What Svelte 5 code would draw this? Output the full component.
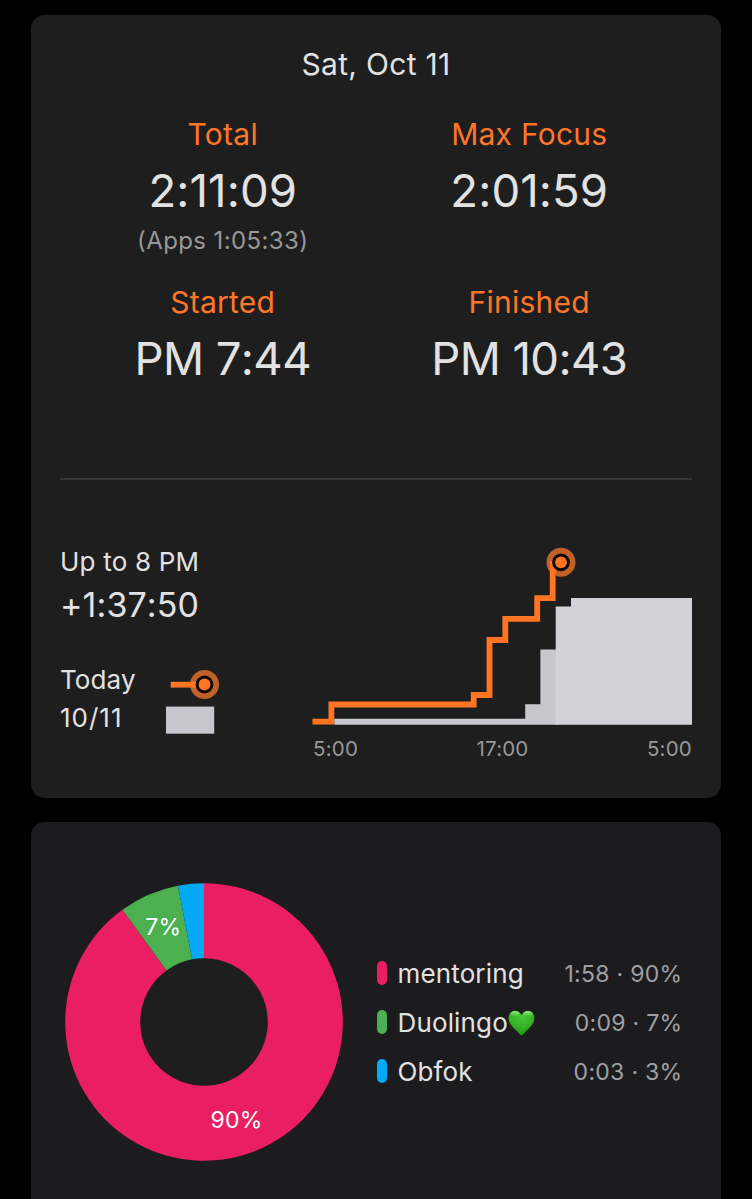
<script>
  const stats = [
    { label: "Total", value: "2:11:09", note: "(Apps 1:05:33)", duration: true },
    { label: "Max Focus", value: "2:01:59", duration: true },
    { label: "Started", value: "PM 7:44" },
    { label: "Finished", value: "PM 10:43" },
  ];

  const tasks = [
    { name: "mentoring", time: "1:58", percent: 90, color: "#e91e63" },
    { name: "Duolingo", time: "0:09", percent: 7, color: "#4caf50", heart: true },
    { name: "Obfok", time: "0:03", percent: 3, color: "#03a9f4" },
  ];

  const CENTER = 139;
  const OUTER = 138.8;
  const INNER = 63.8;

  function point(percent, radius) {
    const angle = (percent / 100) * Math.PI * 2;
    const x = CENTER + radius * Math.sin(angle);
    const y = CENTER - radius * Math.cos(angle);
    return `${x.toFixed(2)} ${y.toFixed(2)}`;
  }

  function slicePath(from, to) {
    const large = to - from > 50 ? 1 : 0;
    return [
      `M${point(from, OUTER)}`,
      `A${OUTER} ${OUTER} 0 ${large} 1 ${point(to, OUTER)}`,
      `L${point(to, INNER)}`,
      `A${INNER} ${INNER} 0 ${large} 0 ${point(from, INNER)}Z`,
    ].join(" ");
  }

  let start = 0;
  const slices = tasks.map((task) => {
    const from = start;
    start += task.percent;
    return { color: task.color, path: slicePath(from, start) };
  });
</script>

{#snippet marker(x, y)}
  <circle cx={x} cy={y} r="8.9" class="marker-ring" />
  <circle cx={x} cy={y} r="5.9" class="marker-dot" />
{/snippet}

<main>
  <section class="card day">
    <h1>Sat, Oct 11</h1>

    <div class="stats">
      {#each stats as stat}
        <div class="stat">
          <span class="label">{stat.label}</span>
          <span class="value" class:duration={stat.duration}>{stat.value}</span>
          {#if stat.note}
            <span class="note">{stat.note}</span>
          {/if}
        </div>
      {/each}
    </div>

    <hr />

    <div class="progress">
      <div class="compare">
        <span class="until">Up to 8 PM</span>
        <span class="diff">+1:37:50</span>
        <div class="keys">
          <div class="key-names">
            <span>Today</span>
            <span class="date">10/11</span>
          </div>
          <svg width="54" height="66" viewBox="0 0 54 66">
            <circle cx="38.5" cy="16.5" r="14.5" class="halo" />
            <path d="M4.7 16.7H31" class="line" />
            {@render marker(38.5, 16.5)}
            <rect x="0" y="38.6" width="48.2" height="27.1" class="area" />
          </svg>
        </div>
      </div>

      <div class="chart">
        <svg width="380" height="190" viewBox="0 0 380 190">
          <path
            d="M22.3 178.8H213.2V164.3H228.4V109.6H245V184.7H22.3Z"
            class="area"
          />
          <path d="M243.7 66.6H259V58.1H380V184.7H243.7Z" class="area-late" />
          <circle cx="249" cy="22.3" r="14.5" class="halo" />
          <path
            d="M.5 181.7H19.4V164.5H161.7V155H177.5V100H193.3V78.8H225.2V58.2H240.7V21"
            class="line"
          />
          {@render marker(249, 22.3)}
        </svg>
        <div class="axis">
          <span>5:00</span>
          <span>17:00</span>
          <span>5:00</span>
        </div>
      </div>
    </div>
  </section>

  <section class="card tasks">
    <svg class="donut" width="278" height="278" viewBox="0 0 278 278">
      <circle cx={CENTER} cy={CENTER} r="64.5" fill="#1e1e1e" />
      {#each slices as slice}
        <path d={slice.path} fill={slice.color} />
      {/each}
      <text x="98.3" y="51.8">7%</text>
      <text x="171.6" y="245.3">90%</text>
    </svg>

    <ul>
      {#each tasks as task}
        <li>
          <i class="pill" style="background: {task.color}"></i>
          <span class="name">{task.name}</span>
          {#if task.heart}
            <svg class="heart" width="27" height="26" viewBox="0 0 27 26">
              <defs>
                <radialGradient id="heart" cx=".5" cy=".2" r=".8">
                  <stop offset="0" stop-color="#48c936" />
                  <stop offset=".55" stop-color="#35b425" />
                  <stop offset="1" stop-color="#1f9412" />
                </radialGradient>
                <linearGradient id="shine" x2="0" y2="1">
                  <stop offset="0" stop-color="#b5efa6" stop-opacity=".9" />
                  <stop offset="1" stop-color="#6ed85a" stop-opacity="0" />
                </linearGradient>
              </defs>
              <path
                d="M13.5 25.3C12.2 25.3 10.4 22.6 7.5 19.8C3.6 16.1.6 12.8.6 7.8C.6 3.7 3.4.8 7 .8C10.1.8 12.4 2.4 13.5 5C14.6 2.4 16.9.8 20 .8C23.6.8 26.4 3.7 26.4 7.8C26.4 12.8 23.4 16.1 19.5 19.8C16.6 22.6 14.8 25.3 13.5 25.3Z"
                fill="url(#heart)"
              />
              <ellipse cx="7" cy="4" rx="4.4" ry="2.8" fill="url(#shine)" />
              <ellipse cx="20" cy="4" rx="4.4" ry="2.8" fill="url(#shine)" />
            </svg>
          {/if}
          <span class="share">{task.time} · {task.percent}%</span>
        </li>
      {/each}
    </ul>
  </section>
</main>

<style>
  :global(body) {
    background: #000;
  }

  main {
    box-sizing: border-box;
    height: 1199px;
    padding: 15px 31px 0;
    display: flex;
    flex-direction: column;
    gap: 24px;
    overflow: hidden;
    font-family: Inter, "Liberation Sans", sans-serif;
    color: #e2e2e2;
  }

  .card {
    box-sizing: border-box;
    flex: none;
    border-radius: 14px;
    background: #1e1e1e;
  }

  .day {
    height: 783px;
    padding: 29px 29px 0;
  }

  h1 {
    margin: 0;
    font-size: 30px;
    font-weight: 400;
    line-height: 40px;
    letter-spacing: 0.3px;
    text-align: center;
  }

  .stats {
    display: grid;
    grid-template-columns: 1fr 1fr;
    grid-template-rows: 141px 104px;
    row-gap: 26.5px;
    padding: 30px 9.5px 0;
  }

  .stat {
    display: flex;
    flex-direction: column;
    align-items: center;
  }

  .label {
    font-size: 30px;
    line-height: 40px;
    letter-spacing: 0.25px;
    color: #ff7629;
  }

  .value {
    margin-top: 8px;
    font-size: 45.5px;
    line-height: 57px;
    letter-spacing: -0.6px;
    font-kerning: none;
  }

  .value.duration {
    letter-spacing: 0.1px;
  }

  .note {
    margin-top: 6px;
    font-size: 24px;
    line-height: 31px;
    letter-spacing: 0.4px;
    color: #989898;
  }

  hr {
    height: 2px;
    margin: 92.5px 0 0;
    border: 0;
    background: #363636;
  }

  .progress {
    display: flex;
    justify-content: space-between;
    padding-top: 60px;
  }

  .compare {
    display: flex;
    flex-direction: column;
    padding-top: 4px;
    font-size: 26px;
  }

  .until {
    line-height: 35px;
    letter-spacing: 0.2px;
  }

  .diff {
    margin-top: 4px;
    font-size: 34px;
    line-height: 44px;
    letter-spacing: 0.1px;
    font-kerning: none;
  }

  .keys {
    display: flex;
    margin-top: 36px;
  }

  .keys svg {
    margin-top: 5px;
  }

  .key-names {
    display: flex;
    flex-direction: column;
    gap: 4px;
    width: 106px;
    line-height: 34px;
    letter-spacing: 0.1px;
  }

  .date {
    letter-spacing: 1px;
    font-kerning: none;
  }

  .chart {
    width: 380px;
  }

  .chart svg {
    display: block;
  }

  .axis {
    display: flex;
    justify-content: space-between;
    margin-top: 5px;
    padding-left: 1px;
    font-size: 20.5px;
    line-height: 27px;
    letter-spacing: 0.2px;
    color: #989898;
  }

  .line {
    fill: none;
    stroke: #ff7524;
    stroke-width: 5.8;
  }

  .area {
    fill: #c8c7ce;
  }

  .area-late {
    fill: #d2d1d7;
  }

  .halo {
    fill: #c0602a;
  }

  .marker-ring {
    fill: #0d0602;
  }

  .marker-dot {
    fill: #ff7524;
  }

  .tasks {
    display: flex;
    align-items: flex-start;
    height: 420px;
    padding: 61px 38.5px 0 34.4px;
    background: #1c1c1e;
  }

  .donut text {
    font-size: 23px;
    letter-spacing: 0.3px;
    fill: #fff;
    text-anchor: middle;
  }

  ul {
    flex: 1;
    display: flex;
    flex-direction: column;
    gap: 15.2px;
    margin: 73px 0 0 34.1px;
    padding: 0;
    list-style: none;
  }

  li {
    display: flex;
    align-items: center;
    height: 34px;
  }

  .pill {
    width: 10px;
    height: 24px;
    margin-right: 10px;
    border-radius: 5px;
  }

  .name {
    font-size: 26px;
    letter-spacing: 0.15px;
  }

  .heart {
    margin-top: 2px;
  }

  .share {
    margin-left: auto;
    padding-top: 1.5px;
    font-size: 23px;
    letter-spacing: 0.3px;
    color: #a0a0a2;
  }
</style>
